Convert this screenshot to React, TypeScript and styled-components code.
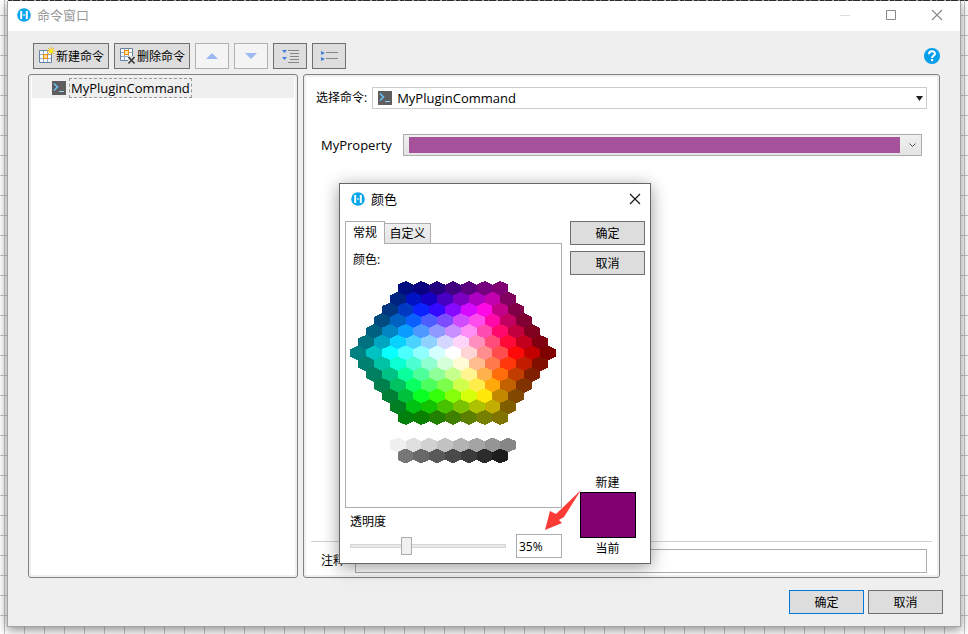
import React, { useState } from "react";
import styled, { createGlobalStyle } from "styled-components";

const Global = createGlobalStyle`
  * { box-sizing: border-box; }
  html, body, #root { height: 100%; }
  body { margin: 0; overflow: hidden; }
  body, button, input, select {
    font-family: "Open Sans", "Noto Sans CJK SC", sans-serif;
    font-size: 12px;
    line-height: 16px;
    color: #000;
  }
`;

const Desktop = styled.div`
  height: 100%;
  padding: 1px 7px 7px;
  background-color: #fff;
  background-image: repeating-linear-gradient(to right, #333 0 4px, #999 4px 5px, #333 5px 12px, #bbb 12px 14px),
    linear-gradient(to right, #c6c6c6 1px, transparent 1px),
    linear-gradient(#c6c6c6 1px, transparent 1px);
  background-size: 100% 1px, 20px 20px, 20px 20px;
  background-repeat: no-repeat, repeat, repeat;
  background-position: 8px 0, 4px 0, 0 15px;
`;

const Window = styled.main`
  position: relative;
  display: flex;
  flex-direction: column;
  height: 100%;
  border: 1px solid #a3a3a3;
  border-top: 0;
  background: #efefef;
  box-shadow: 0 3px 10px rgba(0, 0, 0, 0.45);
`;

const TitleBar = styled.header`
  display: flex;
  align-items: center;
  flex: none;
  height: 30px;
  padding: 0 17px 2px 9px;
  gap: 6px;
  background: #fff;
`;

const Title = styled.h1<{ $muted?: boolean }>`
  flex: 1;
  margin: 0;
  font-size: 13px;
  line-height: 18px;
  font-weight: 400;
  color: ${(p) => (p.$muted ? "#999" : "#000")};
`;

const Captions = styled.div`
  display: flex;
  gap: 34px;
`;

const Plain = styled.button`
  display: flex;
  padding: 0;
  border: 0;
  background: none;
`;

const Toolbar = styled.div`
  display: flex;
  align-items: center;
  flex: none;
  gap: 5px;
  margin: 12px 20px 5px 25px;
`;

const Tool = styled.button<{ $icon?: boolean }>`
  display: flex;
  align-items: center;
  justify-content: center;
  gap: 1px;
  width: ${(p) => (p.$icon ? 34 : 76)}px;
  height: 26px;
  padding: 0;
  white-space: nowrap;
  border: 1px solid #707070;
  background: #ddd;
  &:disabled { border-color: #adb2b5; background: #f4f4f4; }
`;

const ToolLabel = styled.span`padding-top: 2px;`;

const Spacer = styled.div`flex: 1;`;

const Body = styled.div`
  display: flex;
  flex: 1;
  min-height: 0;
  gap: 5px;
  padding: 0 20px;
`;

const Panel = styled.section`
  border: 1px solid #828282;
  border-radius: 3px;
  background: #fff;
  box-shadow: inset 0 0 0 2px #efefef;
`;

const TreePanel = styled(Panel)`
  flex: none;
  width: 270px;
  padding: 2px 3px;
`;

const TreeRow = styled.div`
  display: flex;
  align-items: center;
  gap: 3px;
  height: 21px;
  padding-left: 20px;
  background: #efefef;
`;

const TreeName = styled.span`
  height: 20px;
  padding: 0 1px;
  border: 1px dashed #999;
  font-size: 13px;
  line-height: 18px;
`;

const Form = styled(Panel)`
  display: flex;
  flex-direction: column;
  flex: 1;
  min-width: 0;
  padding: 12px 7px 4px;
`;

const Field = styled.div`
  display: flex;
  align-items: center;
  padding: 0 5px;
`;

const CommandBox = styled.div`
  display: flex;
  align-items: center;
  flex: 1;
  height: 22px;
  margin-left: 5px;
  padding-left: 5px;
  border: 1px solid #ccc;
  gap: 4px;
`;

const CommandSelect = styled.select`
  flex: 1;
  height: 20px;
  padding: 0 0 0 1px;
  border: 0;
  appearance: none;
  font-size: 13px;
  background: transparent url("data:image/svg+xml,%3Csvg xmlns='http://www.w3.org/2000/svg' width='7' height='5'%3E%3Cpath d='M0 0h7L3.5 5z' fill='%23222'/%3E%3C/svg%3E") no-repeat right 3px center;
`;

const PropertyRow = styled(Field)`
  margin-top: 25px;
  padding: 0 10px;
`;

const PropertyName = styled.span`
  width: 82px;
  font-size: 13px;
`;

const ColorPicker = styled.button`
  display: flex;
  align-items: center;
  flex: 1;
  height: 22px;
  padding: 2px 5px;
  gap: 9px;
  border: 1px solid #acacac;
  background: linear-gradient(#f0f0f0, #e4e4e4);
`;

const ColorBar = styled.span`
  flex: 1;
  height: 16px;
  background: #a6529b;
`;

const NoteRow = styled.div`
  display: flex;
  align-items: center;
  margin-top: auto;
  padding: 7px 5px 0 10px;
  border-top: 1px solid #d0d0d0;
`;

const NoteInput = styled.input`
  flex: 1;
  height: 24px;
  margin-left: 10px;
  border: 1px solid #abadb3;
  background: #fff;
`;

const Footer = styled.footer`
  display: flex;
  justify-content: flex-end;
  flex: none;
  gap: 4px;
  padding: 12px 17px 12px;
`;

const Push = styled.button<{ $primary?: boolean }>`
  width: 75px;
  height: 24px;
  padding: 2px 0 0;
  border: 1px solid ${(p) => (p.$primary ? "#0078d7" : "#707070")};
  background: #ddd;
`;

const Dialog = styled.div`
  position: absolute;
  left: 331px;
  top: 182px;
  display: flex;
  flex-direction: column;
  width: 312px;
  border: 1px solid #666;
  background: #fff;
  box-shadow: 0 3px 16px rgba(0, 0, 0, 0.4);
`;

const DialogTitle = styled.header`
  display: flex;
  align-items: center;
  height: 30px;
  padding: 0 9px 0 11px;
  gap: 6px;
`;

const DialogBody = styled.div`
  display: flex;
  justify-content: space-between;
  padding: 7px 5px 5px;
`;

const Main = styled.div`width: 217px;`;

const Tabs = styled.div`
  display: flex;
  align-items: flex-end;
`;

const Tab = styled.button<{ $active?: boolean }>`
  position: relative;
  width: ${(p) => (p.$active ? 40 : 47)}px;
  height: ${(p) => (p.$active ? 23 : 20)}px;
  margin-right: -1px;
  padding: ${(p) => (p.$active ? 0 : 1)}px 0 0;
  border: 1px solid #acacac;
  border-bottom: 0;
  margin-bottom: ${(p) => (p.$active ? "-1px" : "0")};
  background: ${(p) => (p.$active ? "#fff" : "linear-gradient(#f0f0f0, #e5e5e5)")};
`;

const TabPage = styled.div`
  height: 265px;
  padding: 8px 7px;
  border: 1px solid #acacac;
`;

const Swatches = styled.svg`
  display: block;
  margin: 12px 0 0 -3px;
`;

const Opacity = styled.label`
  display: block;
  margin: 6px 0 4px 5px;
`;

const SliderRow = styled.div`
  display: flex;
  align-items: center;
  justify-content: space-between;
  padding-left: 5px;
`;

const Slider = styled.input`
  width: 156px;
  height: 20px;
  margin: 0;
  appearance: none;
  background: none;
  &::-webkit-slider-runnable-track {
    height: 4px;
    border: 1px solid #d6d6d6;
    background: #e7eaea;
  }
  &::-webkit-slider-thumb {
    appearance: none;
    width: 11px;
    height: 18px;
    margin-top: -8px;
    border: 1px solid #acacac;
    background: #f0f0f0;
  }
`;

const Percent = styled.input`
  width: 46px;
  height: 24px;
  padding: 1px 2px 0;
  border: 1px solid #abadb3;
  background: #fff;
`;

const Side = styled.div`
  display: flex;
  flex-direction: column;
  align-items: center;
  gap: 6px;
  width: 75px;
`;

const Preview = styled.div`
  display: flex;
  flex-direction: column;
  align-items: center;
  margin: auto 0 1px;
`;

const PreviewColor = styled.div`
  width: 56px;
  height: 46px;
  margin: 1px 0 3px;
  border: 1px solid #000;
  background: #800072;
`;

const Arrow = styled.svg`
  position: absolute;
  left: 204px;
  top: 305px;
  pointer-events: none;
`;

const Logo = () => (
  <svg width="14" height="14" viewBox="0 0 14 14" aria-hidden="true">
    <circle cx="7" cy="7" r="6.8" fill="#06a5ee" />
    <path d="M3.2 3h2v8h-2zM8.800 3h2v8h-2zM6.300 6.200h1.500v1.500H6.300z" fill="#fff" />
  </svg>
);

const CommandIcon = () => (
  <svg width="14" height="14" viewBox="0 0 14 14" aria-hidden="true">
    <rect width="14" height="14" fill="#5f5d60" />
    <path d="M2 2.5 5.5 6 2 9.5" fill="none" stroke="#67c5f5" strokeWidth="1.5" />
    <path d="M7 10.5h5" stroke="#8fd3f5" />
  </svg>
);

const TableIcon = ({ remove }: { remove?: boolean }) => (
  <svg width="17" height="18" viewBox="0 0 17 18" aria-hidden="true">
    <g transform={remove ? "translate(0 0)" : "translate(0 2)"}>
      <path d="M1.5 1.5h12v12h-12z" fill="#f8fcff" />
      <path d="M5.5 1.5v12M9.5 1.5v12M1.5 5.5h12M1.5 9.5h12" fill="none" stroke="#93abc8" />
      <path d="M1.5 1.5h12v12h-12z" fill="none" stroke="#66809f" />
      <rect x="5.5" y={remove ? 3.5 : 5.5} width="4" height="4" fill="#ffe0a0" stroke="#ef8e00" />
    </g>
    {remove ? (
      <>
        <path d="M9 9h8v9H9z" fill="#ddd" />
        <path d="m9.500 10 6 6.500M15.500 10l-6 6.500" stroke="#333" strokeWidth="1.500" />
      </>
    ) : (
      <>
        <path d="M13 0v8M9 4h8M10 1l6 6M16 1l-6 6" stroke="#f7b90a" />
        <circle cx="13" cy="4" r="2" fill="#ffee20" />
      </>
    )}
  </svg>
);

const Triangle = ({ up }: { up?: boolean }) => (
  <svg width="12" height="6" viewBox="0 0 12 6" aria-hidden="true">
    <path d={up ? "M0 6h12L6 0z" : "M0 0h12L6 6z"} fill="#9cb8f0" />
  </svg>
);

const ExpandIcon = () => (
  <svg width="17" height="14" viewBox="0 0 17 14" aria-hidden="true">
    <path d="M0 1h5L2.500 4zM0 8h5L2.500 11z" fill="#3f7de0" />
    <path d="M6 1.500h11M8 4.500h9M8 7.500h9M8 10.500h9M6 13.500h11" stroke="#858585" />
  </svg>
);

const CollapseIcon = () => (
  <svg width="17" height="12" viewBox="0 0 17 12" aria-hidden="true">
    <path d="M0 1l4 2-4 2zM0 7l4 2-4 2z" fill="#3f7de0" />
    <path d="M5 2.500h12M5 8.500h12" stroke="#858585" />
  </svg>
);

const CloseIcon = ({ color }: { color: string }) => (
  <svg width="12" height="12" viewBox="0 0 12 12" aria-hidden="true">
    <path d="m1 1 10 10M11 1 1 11" stroke={color} strokeWidth="1.1" />
  </svg>
);

const COL = 15.8;
const ROW = 10.75;
const LIGHTNESS = [100, 91.5, 78, 65, 52, 38, 25];

const hexagon = (x: number, y: number) =>
  [[0, -7.5], [8, -3.7], [8, 3.7], [0, 7.5], [-8, 3.7], [-8, -3.7]]
    .map(([dx, dy]) => `${(x + dx).toFixed(1)},${(y + dy).toFixed(1)}`)
    .join(" ");

type Cell = { points: string; fill: string };

const cells: Cell[] = [];
for (let row = -6; row <= 6; row++) {
  const distance = Math.abs(row);
  const count = 13 - distance;
  for (let i = 0; i < count; i++) {
    const column = i - (count - 1) / 2;
    const ring = Math.max(distance, Math.abs(column) + distance / 2);
    const dx = column * COL;
    const dy = row * ROW;
    const hue = (Math.atan2(dy, dx) * 180) / Math.PI;
    cells.push({
      points: hexagon(103 + dx, 73 + dy),
      fill: `hsl(${Math.round(hue + 360) % 360} 100% ${LIGHTNESS[ring]}%)`,
    });
  }
}
for (let i = 0; i < 15; i++) {
  const second = i > 7;
  const column = second ? i - 11 : i - 3.5;
  const shade = 239 - i * 15;
  cells.push({
    points: hexagon(103 + column * COL, second ? 176 : 165),
    fill: `rgb(${shade} ${shade} ${shade})`,
  });
}

const ColorDialog = () => {
  const [opacity, setOpacity] = useState(35);
  return (
    <Dialog role="dialog" aria-labelledby="color-title">
      <DialogTitle>
        <Logo />
        <Title as="h2" id="color-title">颜色</Title>
        <Plain aria-label="关闭"><CloseIcon color="#111" /></Plain>
      </DialogTitle>
      <DialogBody>
        <Main>
          <Tabs role="tablist">
            <Tab role="tab" aria-selected="true" $active>常规</Tab>
            <Tab role="tab" aria-selected="false">自定义</Tab>
          </Tabs>
          <TabPage role="tabpanel">
            颜色:
            <Swatches width="206" height="186" viewBox="0 0 206 186" shapeRendering="crispEdges">
              {cells.map((cell) => (
                <polygon key={cell.points} points={cell.points} fill={cell.fill} />
              ))}
            </Swatches>
          </TabPage>
          <Opacity htmlFor="opacity">透明度</Opacity>
          <SliderRow>
            <Slider id="opacity" type="range" min="0" max="100" value={opacity} onChange={(e) => setOpacity(Number(e.target.value))} />
            <Percent aria-label="透明度百分比" value={`${opacity}%`} onChange={(e) => setOpacity(parseInt(e.target.value, 10) || 0)} />
          </SliderRow>
        </Main>
        <Side>
          <Push>确定</Push>
          <Push>取消</Push>
          <Preview>
            <span>新建</span>
            <PreviewColor />
            <span>当前</span>
          </Preview>
        </Side>
      </DialogBody>
      <Arrow width="38" height="42" viewBox="0 0 38 42" aria-hidden="true">
        <path d="M37 1 12 25 6 22 1 41l17-7-3-3 5-3z" fill="#fb3b36" />
      </Arrow>
    </Dialog>
  );
};

export default function App() {
  return (
    <>
      <Global />
      <Desktop>
        <Window>
          <TitleBar>
            <Logo />
            <Title $muted>命令窗口</Title>
            <Captions>
              <Plain aria-label="最小化">
                <svg width="12" height="12"><path d="M1 6.500h10" stroke="#ddd" /></svg>
              </Plain>
              <Plain aria-label="最大化">
                <svg width="12" height="12"><path d="M1.500 1.500h9v9h-9z" fill="none" stroke="#888" /></svg>
              </Plain>
              <Plain aria-label="关闭窗口"><CloseIcon color="#888" /></Plain>
            </Captions>
          </TitleBar>
          <Toolbar>
            <Tool><TableIcon /><ToolLabel>新建命令</ToolLabel></Tool>
            <Tool><TableIcon remove /><ToolLabel>删除命令</ToolLabel></Tool>
            <Tool $icon disabled aria-label="上移"><Triangle up /></Tool>
            <Tool $icon disabled aria-label="下移"><Triangle /></Tool>
            <Tool $icon aria-label="展开"><ExpandIcon /></Tool>
            <Tool $icon aria-label="折叠"><CollapseIcon /></Tool>
            <Spacer />
            <Plain aria-label="帮助">
              <svg width="16" height="16" viewBox="0 0 16 16">
                <circle cx="8" cy="8" r="8" fill="#069fec" />
                <path d="M5 6.200C5 2.300 11 2.500 11 5.700c0 2-3 2.200-3 4.300" fill="none" stroke="#fff" strokeWidth="2" />
                <rect x="7" y="11" width="2.200" height="2.200" fill="#fff" />
              </svg>
            </Plain>
          </Toolbar>
          <Body>
            <TreePanel>
              <TreeRow><CommandIcon /><TreeName>MyPluginCommand</TreeName></TreeRow>
            </TreePanel>
            <Form>
              <Field>
                <label htmlFor="command">选择命令:</label>
                <CommandBox>
                  <CommandIcon />
                  <CommandSelect id="command"><option>MyPluginCommand</option></CommandSelect>
                </CommandBox>
              </Field>
              <PropertyRow>
                <PropertyName id="property">MyProperty</PropertyName>
                <ColorPicker aria-labelledby="property">
                  <ColorBar />
                  <svg width="7" height="5" viewBox="0 0 7 5"><path d="m.5.5 3 3 3-3" fill="none" stroke="#555" /></svg>
                </ColorPicker>
              </PropertyRow>
              <NoteRow>
                <label htmlFor="note">注释</label>
                <NoteInput id="note" />
              </NoteRow>
            </Form>
          </Body>
          <Footer>
            <Push $primary>确定</Push>
            <Push>取消</Push>
          </Footer>
          <ColorDialog />
        </Window>
      </Desktop>
    </>
  );
}
